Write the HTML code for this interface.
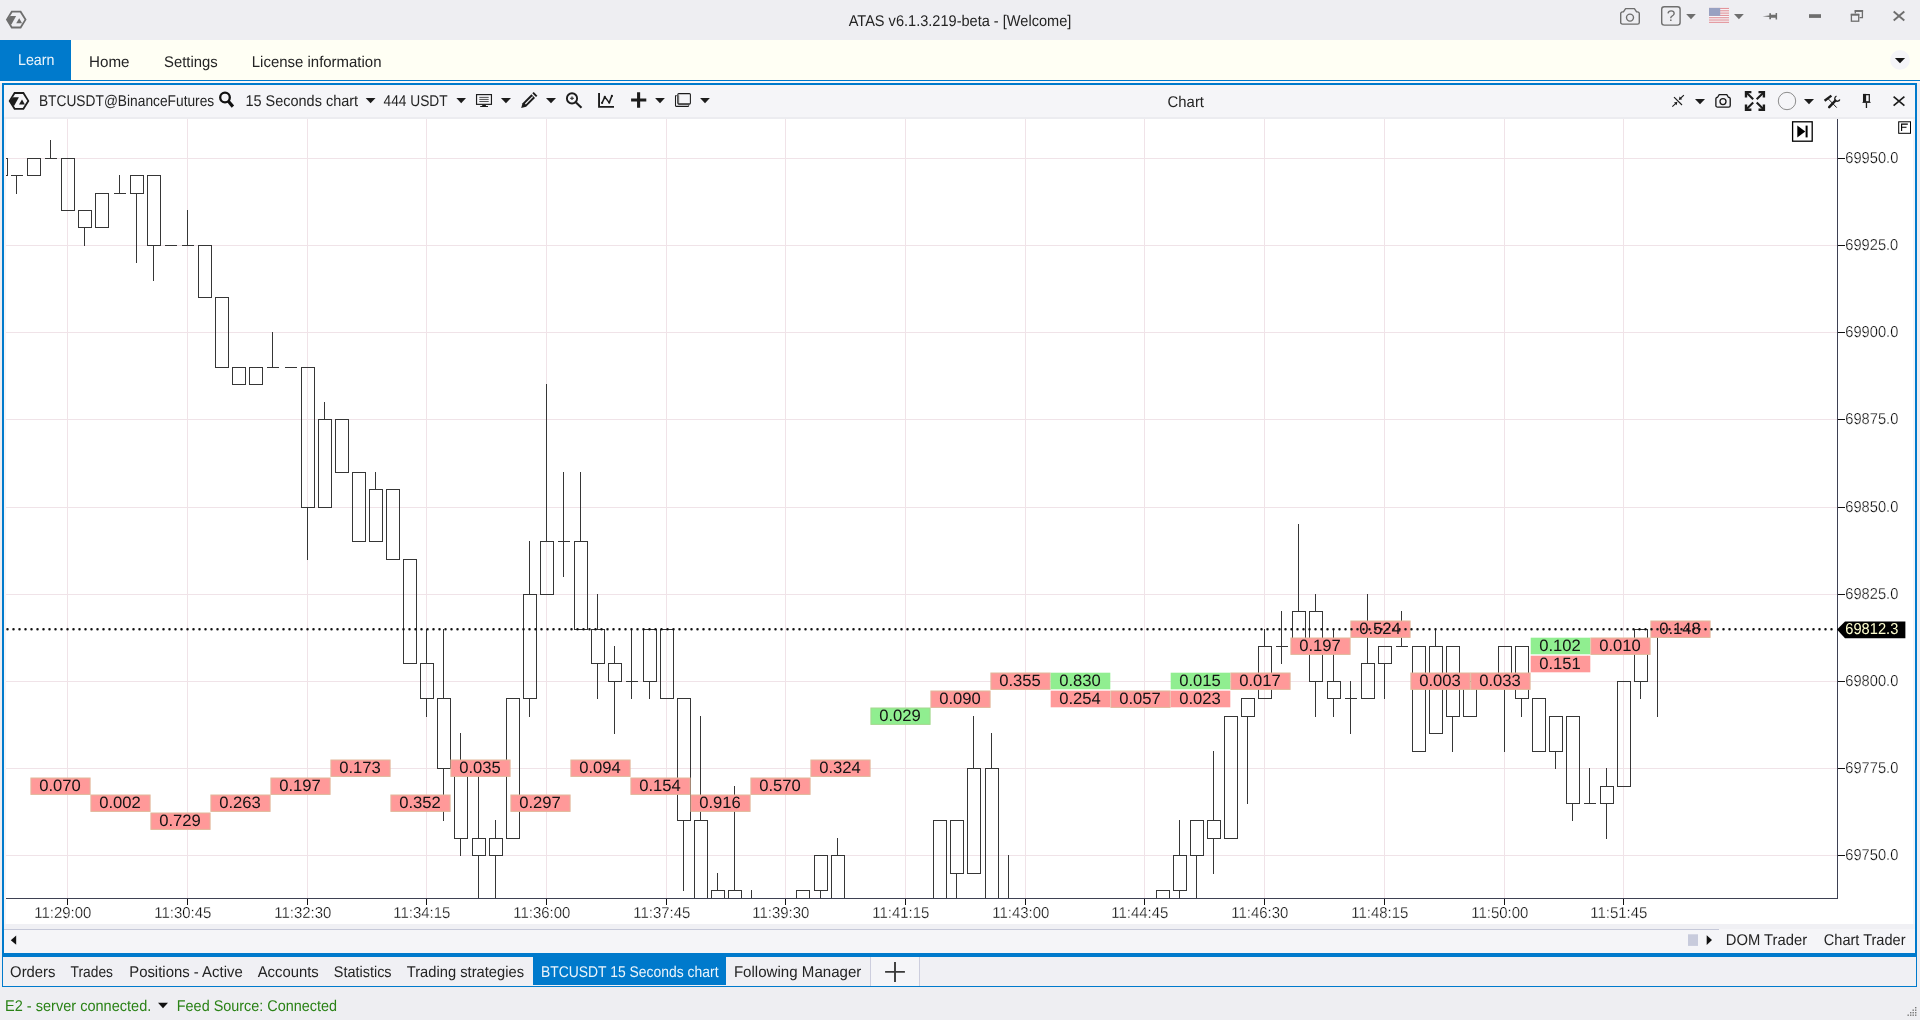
<!DOCTYPE html>
<html lang="en"><head><meta charset="utf-8"><title>ATAS v6.1.3.219-beta - [Welcome]</title>
<style>
html,body{margin:0;padding:0;background:#eeeef2;overflow:hidden}
body{width:1920px;height:1020px;position:relative}
svg{position:absolute;left:0;top:0;display:block;will-change:transform}
text{font-family:"Liberation Sans",Arial,sans-serif;white-space:pre}
</style></head><body>
<svg width="1920" height="1020" viewBox="0 0 1920 1020">
<rect x="0" y="0" width="1920" height="1020" fill="#eeeef2"/>
<g id="menubar">
<rect x="0" y="40" width="1920" height="40" fill="#fffff4"/>
<rect x="0" y="40" width="71" height="41" fill="#007acc"/>
<rect x="0" y="80" width="1920" height="1" fill="#007acc"/>
<rect x="0" y="81" width="1920" height="2" fill="#fbf6f5"/>
<text transform="matrix(1 0 0.0005 1 0 0)" x="17.97" y="65.00" font-size="15.55" fill="#ffffff" textLength="36.50" lengthAdjust="spacingAndGlyphs" fill-opacity="0.92">Learn</text>
<text transform="matrix(1 0 0.0005 1 0 0)" x="88.97" y="67.00" font-size="15.55" fill="#242424" textLength="40.50" lengthAdjust="spacingAndGlyphs">Home</text>
<text transform="matrix(1 0 0.0005 1 0 0)" x="163.97" y="67.00" font-size="15.55" fill="#242424" textLength="53.75" lengthAdjust="spacingAndGlyphs">Settings</text>
<text transform="matrix(1 0 0.0005 1 0 0)" x="251.77" y="67.00" font-size="15.55" fill="#242424" textLength="129.70" lengthAdjust="spacingAndGlyphs">License information</text>
<circle cx="1900" cy="59.9" r="9.9" fill="#f5f5f8"/>
<path d="M1894.9 57.9h10.2l-5.1 5.3z" fill="#151515"/>
</g>
<g id="titlebar">
<text transform="matrix(1 0 0.0005 1 0 0)" x="848.69" y="26.00" font-size="15.55" fill="#242424" textLength="222.60" lengthAdjust="spacingAndGlyphs">ATAS v6.1.3.219-beta - [Welcome]</text>
</g>
<g id="frame">
<rect x="2" y="83" width="1915" height="874" fill="#007acc"/>
<rect x="4" y="85" width="1911" height="868" fill="#f5f5f8"/>
<rect x="4" y="117" width="1911" height="2" fill="#ececf0"/>
<rect x="6" y="119" width="1907" height="805" fill="#ffffff"/>
<rect x="4" y="924" width="1911" height="5" fill="#f0f0f4"/>
<rect x="4" y="929" width="1715" height="1" fill="#c6c9d9"/>
</g>
<g id="tabs">
<rect x="2" y="957" width="1915" height="30" fill="#007acc"/>
<rect x="3" y="957" width="1913" height="29" fill="#f0f0f4"/>
<rect x="533" y="957" width="193" height="28" fill="#007acc"/>
<rect x="870" y="957" width="50" height="29" fill="#f5f5f8"/>
<rect x="870" y="957" width="1" height="29" fill="#cdcede"/><rect x="919" y="957" width="1" height="29" fill="#cdcede"/>
<path d="M885.1 971.9h19.8M895 962.1v19.8" stroke="#3a3a3a" stroke-width="1.9" fill="none"/>
<text transform="matrix(1 0 0.0005 1 0 0)" x="9.61" y="976.60" font-size="15.55" fill="#242424" textLength="45.40" lengthAdjust="spacingAndGlyphs">Orders</text>
<text transform="matrix(1 0 0.0005 1 0 0)" x="70.11" y="976.60" font-size="15.55" fill="#242424" textLength="42.40" lengthAdjust="spacingAndGlyphs">Trades</text>
<text transform="matrix(1 0 0.0005 1 0 0)" x="128.71" y="976.60" font-size="15.55" fill="#242424" textLength="113.50" lengthAdjust="spacingAndGlyphs">Positions - Active</text>
<text transform="matrix(1 0 0.0005 1 0 0)" x="257.21" y="976.60" font-size="15.55" fill="#242424" textLength="61.00" lengthAdjust="spacingAndGlyphs">Accounts</text>
<text transform="matrix(1 0 0.0005 1 0 0)" x="333.31" y="976.60" font-size="15.55" fill="#242424" textLength="57.80" lengthAdjust="spacingAndGlyphs">Statistics</text>
<text transform="matrix(1 0 0.0005 1 0 0)" x="406.26" y="976.60" font-size="15.55" fill="#242424" textLength="117.25" lengthAdjust="spacingAndGlyphs">Trading strategies</text>
<text transform="matrix(1 0 0.0005 1 0 0)" x="540.41" y="976.60" font-size="15.55" fill="#ffffff" textLength="177.60" lengthAdjust="spacingAndGlyphs" fill-opacity="0.92">BTCUSDT 15 Seconds chart</text>
<text transform="matrix(1 0 0.0005 1 0 0)" x="733.41" y="976.60" font-size="15.55" fill="#242424" textLength="127.50" lengthAdjust="spacingAndGlyphs">Following Manager</text>
</g>
<g id="status">
<text transform="matrix(1 0 0.0005 1 0 0)" x="4.49" y="1010.60" font-size="15.55" fill="#2a8216" textLength="146.30" lengthAdjust="spacingAndGlyphs">E2 - server connected.</text>
<path d="M158 1002.8h10l-5 5.5z" fill="#111"/>
<text transform="matrix(1 0 0.0005 1 0 0)" x="176.29" y="1010.60" font-size="15.55" fill="#2a8216" textLength="160.30" lengthAdjust="spacingAndGlyphs">Feed Source: Connected</text>
<rect x="1915.0" y="1007.0" width="1.4" height="1.4" fill="#777"/>
<rect x="1912.5" y="1009.5" width="1.4" height="1.4" fill="#777"/>
<rect x="1915.0" y="1009.5" width="1.4" height="1.4" fill="#777"/>
<rect x="1910.0" y="1012.0" width="1.4" height="1.4" fill="#777"/>
<rect x="1912.5" y="1012.0" width="1.4" height="1.4" fill="#777"/>
<rect x="1915.0" y="1012.0" width="1.4" height="1.4" fill="#777"/>
<rect x="1907.5" y="1014.5" width="1.4" height="1.4" fill="#777"/>
<rect x="1910.0" y="1014.5" width="1.4" height="1.4" fill="#777"/>
<rect x="1912.5" y="1014.5" width="1.4" height="1.4" fill="#777"/>
<rect x="1915.0" y="1014.5" width="1.4" height="1.4" fill="#777"/>
</g>
<g id="toolbar">
<text transform="matrix(1 0 0.0005 1 0 0)" x="38.85" y="106.00" font-size="15.55" fill="#242424" textLength="175.35" lengthAdjust="spacingAndGlyphs">BTCUSDT@BinanceFutures</text>
<text transform="matrix(1 0 0.0005 1 0 0)" x="245.35" y="106.00" font-size="15.55" fill="#242424" textLength="112.70" lengthAdjust="spacingAndGlyphs">15 Seconds chart</text>
<text transform="matrix(1 0 0.0005 1 0 0)" x="383.45" y="106.00" font-size="15.55" fill="#242424" textLength="64.20" lengthAdjust="spacingAndGlyphs">444 USDT</text>
<text transform="matrix(1 0 0.0005 1 0 0)" x="1167.55" y="106.75" font-size="15.55" fill="#242424" textLength="36.40" lengthAdjust="spacingAndGlyphs">Chart</text>
</g>
<g id="scrollrow">
<path d="M16.2 935.6v9.2l-5.4-4.6z" fill="#111"/>
<rect x="1688" y="934.3" width="10" height="11.6" fill="#c8cbdc"/>
<path d="M1706.7 935.2v9.8l5.3-4.9z" fill="#111"/>
<text transform="matrix(1 0 0.0005 1 0 0)" x="1725.28" y="944.90" font-size="15.55" fill="#242424" textLength="81.45" lengthAdjust="spacingAndGlyphs">DOM Trader</text>
<text transform="matrix(1 0 0.0005 1 0 0)" x="1823.33" y="944.90" font-size="15.55" fill="#242424" textLength="81.70" lengthAdjust="spacingAndGlyphs">Chart Trader</text>
</g>
<g id="chart">
<rect x="67" y="119" width="1" height="779" fill="#f0e3e8"/>
<rect x="187" y="119" width="1" height="779" fill="#f0e3e8"/>
<rect x="307" y="119" width="1" height="779" fill="#f0e3e8"/>
<rect x="426" y="119" width="1" height="779" fill="#f0e3e8"/>
<rect x="546" y="119" width="1" height="779" fill="#f0e3e8"/>
<rect x="666" y="119" width="1" height="779" fill="#f0e3e8"/>
<rect x="785" y="119" width="1" height="779" fill="#f0e3e8"/>
<rect x="905" y="119" width="1" height="779" fill="#f0e3e8"/>
<rect x="1025" y="119" width="1" height="779" fill="#f0e3e8"/>
<rect x="1144" y="119" width="1" height="779" fill="#f0e3e8"/>
<rect x="1264" y="119" width="1" height="779" fill="#f0e3e8"/>
<rect x="1384" y="119" width="1" height="779" fill="#f0e3e8"/>
<rect x="1504" y="119" width="1" height="779" fill="#f0e3e8"/>
<rect x="1623" y="119" width="1" height="779" fill="#f0e3e8"/>
<rect x="6" y="158" width="1831" height="1" fill="#f0e3e8"/>
<rect x="6" y="245" width="1831" height="1" fill="#f0e3e8"/>
<rect x="6" y="332" width="1831" height="1" fill="#f0e3e8"/>
<rect x="6" y="419" width="1831" height="1" fill="#f0e3e8"/>
<rect x="6" y="507" width="1831" height="1" fill="#f0e3e8"/>
<rect x="6" y="594" width="1831" height="1" fill="#f0e3e8"/>
<rect x="6" y="681" width="1831" height="1" fill="#f0e3e8"/>
<rect x="6" y="768" width="1831" height="1" fill="#f0e3e8"/>
<rect x="6" y="855" width="1831" height="1" fill="#f0e3e8"/>
<clipPath id="cc"><rect x="6" y="119" width="1831" height="779"/></clipPath>
<g clip-path="url(#cc)" shape-rendering="crispEdges" fill="none" stroke="#363636" stroke-width="1">
<rect x="-5.5" y="158.5" width="13" height="17"/>
<path d="M16.5 175V194M11 175.5H23" fill="none"/>
<rect x="27.5" y="158.5" width="13" height="17"/>
<path d="M50.5 140V158M45 158.5H57" fill="none"/>
<rect x="61.5" y="158.5" width="13" height="52"/>
<path d="M84.5 227V246" fill="none"/>
<rect x="78.5" y="210.5" width="13" height="17"/>
<rect x="95.5" y="193.5" width="13" height="34"/>
<path d="M119.5 175V193M114 193.5H126" fill="none"/>
<path d="M136.5 193V263" fill="none"/>
<rect x="130.5" y="175.5" width="13" height="18"/>
<path d="M153.5 245V281" fill="none"/>
<rect x="147.5" y="175.5" width="13" height="70"/>
<path d="M165 245.5H177" fill="none"/>
<path d="M187.5 210V245M182 245.5H194" fill="none"/>
<rect x="198.5" y="245.5" width="13" height="52"/>
<rect x="215.5" y="297.5" width="13" height="70"/>
<rect x="232.5" y="367.5" width="13" height="17"/>
<rect x="249.5" y="367.5" width="13" height="17"/>
<path d="M272.5 332V367M267 367.5H279" fill="none"/>
<path d="M285 367.5H297" fill="none"/>
<path d="M307.5 507V560" fill="none"/>
<rect x="301.5" y="367.5" width="13" height="140"/>
<path d="M324.5 402V419" fill="none"/>
<rect x="318.5" y="419.5" width="13" height="88"/>
<rect x="335.5" y="419.5" width="13" height="53"/>
<rect x="352.5" y="472.5" width="13" height="69"/>
<path d="M375.5 472V489" fill="none"/>
<rect x="369.5" y="489.5" width="13" height="52"/>
<rect x="386.5" y="489.5" width="13" height="70"/>
<rect x="403.5" y="559.5" width="13" height="104"/>
<path d="M426.5 629V663M426.5 698V717" fill="none"/>
<rect x="420.5" y="663.5" width="13" height="35"/>
<path d="M443.5 629V698M443.5 768V821" fill="none"/>
<rect x="437.5" y="698.5" width="13" height="70"/>
<path d="M460.5 733V768M460.5 838V856" fill="none"/>
<rect x="454.5" y="768.5" width="13" height="70"/>
<path d="M478.5 768V838M478.5 855V906" fill="none"/>
<rect x="472.5" y="838.5" width="13" height="17"/>
<path d="M495.5 820V838M495.5 855V906" fill="none"/>
<rect x="489.5" y="838.5" width="13" height="17"/>
<rect x="506.5" y="698.5" width="13" height="140"/>
<path d="M529.5 541V594M529.5 698V717" fill="none"/>
<rect x="523.5" y="594.5" width="13" height="104"/>
<path d="M546.5 384V541" fill="none"/>
<rect x="540.5" y="541.5" width="13" height="53"/>
<path d="M563.5 472V541M563.5 541V577M558 541.5H570" fill="none"/>
<path d="M580.5 472V541" fill="none"/>
<rect x="574.5" y="541.5" width="13" height="88"/>
<path d="M597.5 594V629M597.5 663V699" fill="none"/>
<rect x="591.5" y="629.5" width="13" height="34"/>
<path d="M614.5 646V663M614.5 681V734" fill="none"/>
<rect x="608.5" y="663.5" width="13" height="18"/>
<path d="M631.5 629V681M631.5 681V699M626 681.5H638" fill="none"/>
<path d="M649.5 681V699" fill="none"/>
<rect x="643.5" y="629.5" width="13" height="52"/>
<rect x="660.5" y="629.5" width="13" height="69"/>
<path d="M683.5 820V891" fill="none"/>
<rect x="677.5" y="698.5" width="13" height="122"/>
<path d="M700.5 716V820" fill="none"/>
<rect x="694.5" y="820.5" width="13" height="85"/>
<path d="M717.5 873V890" fill="none"/>
<rect x="711.5" y="890.5" width="13" height="15"/>
<path d="M734.5 786V890" fill="none"/>
<rect x="728.5" y="890.5" width="13" height="15"/>
<path d="M751.5 890V905" fill="none"/>
<rect x="796.5" y="890.5" width="13" height="15"/>
<path d="M820.5 890V906" fill="none"/>
<rect x="814.5" y="855.5" width="13" height="35"/>
<path d="M837.5 838V855" fill="none"/>
<rect x="831.5" y="855.5" width="13" height="50"/>
<rect x="933.5" y="820.5" width="13" height="85"/>
<path d="M956.5 873V906" fill="none"/>
<rect x="950.5" y="820.5" width="13" height="53"/>
<path d="M973.5 716V768" fill="none"/>
<rect x="967.5" y="768.5" width="13" height="105"/>
<path d="M991.5 733V768" fill="none"/>
<rect x="985.5" y="768.5" width="13" height="137"/>
<path d="M1008.5 855V905" fill="none"/>
<rect x="1156.5" y="890.5" width="13" height="15"/>
<path d="M1179.5 820V855M1179.5 890V906" fill="none"/>
<rect x="1173.5" y="855.5" width="13" height="35"/>
<path d="M1196.5 855V906" fill="none"/>
<rect x="1190.5" y="820.5" width="13" height="35"/>
<path d="M1213.5 751V820M1213.5 838V874" fill="none"/>
<rect x="1207.5" y="820.5" width="13" height="18"/>
<rect x="1224.5" y="716.5" width="13" height="122"/>
<path d="M1247.5 716V804" fill="none"/>
<rect x="1241.5" y="698.5" width="13" height="18"/>
<path d="M1264.5 629V646" fill="none"/>
<rect x="1258.5" y="646.5" width="13" height="52"/>
<path d="M1281.5 611V646M1281.5 646V664M1276 646.5H1288" fill="none"/>
<path d="M1298.5 524V611" fill="none"/>
<rect x="1292.5" y="611.5" width="13" height="35"/>
<path d="M1315.5 594V611M1315.5 681V717" fill="none"/>
<rect x="1309.5" y="611.5" width="13" height="70"/>
<path d="M1333.5 629V681M1333.5 698V717" fill="none"/>
<rect x="1327.5" y="681.5" width="13" height="17"/>
<path d="M1350.5 681V698M1350.5 698V734M1345 698.5H1357" fill="none"/>
<path d="M1367.5 594V663" fill="none"/>
<rect x="1361.5" y="663.5" width="13" height="35"/>
<path d="M1384.5 663V699" fill="none"/>
<rect x="1378.5" y="646.5" width="13" height="17"/>
<path d="M1401.5 611V646M1396 646.5H1408" fill="none"/>
<rect x="1412.5" y="646.5" width="13" height="105"/>
<path d="M1435.5 629V646" fill="none"/>
<rect x="1429.5" y="646.5" width="13" height="87"/>
<path d="M1452.5 716V752" fill="none"/>
<rect x="1446.5" y="646.5" width="13" height="70"/>
<rect x="1463.5" y="681.5" width="13" height="35"/>
<path d="M1504.5 681V752" fill="none"/>
<rect x="1498.5" y="646.5" width="13" height="35"/>
<path d="M1521.5 698V717" fill="none"/>
<rect x="1515.5" y="646.5" width="13" height="52"/>
<rect x="1532.5" y="698.5" width="13" height="53"/>
<path d="M1555.5 751V769" fill="none"/>
<rect x="1549.5" y="716.5" width="13" height="35"/>
<path d="M1572.5 803V821" fill="none"/>
<rect x="1566.5" y="716.5" width="13" height="87"/>
<path d="M1589.5 768V803M1584 803.5H1596" fill="none"/>
<path d="M1606.5 768V786M1606.5 803V839" fill="none"/>
<rect x="1600.5" y="786.5" width="13" height="17"/>
<rect x="1617.5" y="681.5" width="13" height="105"/>
<path d="M1640.5 681V699" fill="none"/>
<rect x="1634.5" y="629.5" width="13" height="52"/>
<path d="M1657.5 629V717M1652 629.5H1664" fill="none"/>
</g>
<g id="labels" font-size="16.4" text-anchor="middle" fill="#141414">
<rect x="30.9" y="778" width="59.2" height="16.4" fill="#ff9999" stroke="#e2b79a" stroke-width="1"/>
<text transform="matrix(1 0 0.0005 1 0 0)" x="59.60" y="791" textLength="41.7" lengthAdjust="spacingAndGlyphs">0.070</text>
<rect x="90.9" y="795" width="59.2" height="16.4" fill="#ff9999" stroke="#e2b79a" stroke-width="1"/>
<text transform="matrix(1 0 0.0005 1 0 0)" x="119.60" y="808" textLength="41.7" lengthAdjust="spacingAndGlyphs">0.002</text>
<rect x="150.9" y="813" width="59.2" height="16.4" fill="#ff9999" stroke="#e2b79a" stroke-width="1"/>
<text transform="matrix(1 0 0.0005 1 0 0)" x="179.59" y="826" textLength="41.7" lengthAdjust="spacingAndGlyphs">0.729</text>
<rect x="210.9" y="795" width="59.2" height="16.4" fill="#ff9999" stroke="#e2b79a" stroke-width="1"/>
<text transform="matrix(1 0 0.0005 1 0 0)" x="239.60" y="808" textLength="41.7" lengthAdjust="spacingAndGlyphs">0.263</text>
<rect x="270.9" y="778" width="59.2" height="16.4" fill="#ff9999" stroke="#e2b79a" stroke-width="1"/>
<text transform="matrix(1 0 0.0005 1 0 0)" x="299.60" y="791" textLength="41.7" lengthAdjust="spacingAndGlyphs">0.197</text>
<rect x="330.9" y="760" width="59.2" height="16.4" fill="#ff9999" stroke="#e2b79a" stroke-width="1"/>
<text transform="matrix(1 0 0.0005 1 0 0)" x="359.61" y="773" textLength="41.7" lengthAdjust="spacingAndGlyphs">0.173</text>
<rect x="390.9" y="795" width="59.2" height="16.4" fill="#ff9999" stroke="#e2b79a" stroke-width="1"/>
<text transform="matrix(1 0 0.0005 1 0 0)" x="419.60" y="808" textLength="41.7" lengthAdjust="spacingAndGlyphs">0.352</text>
<rect x="450.9" y="760" width="59.2" height="16.4" fill="#ff9999" stroke="#e2b79a" stroke-width="1"/>
<text transform="matrix(1 0 0.0005 1 0 0)" x="479.61" y="773" textLength="41.7" lengthAdjust="spacingAndGlyphs">0.035</text>
<rect x="510.9" y="795" width="59.2" height="16.4" fill="#ff9999" stroke="#e2b79a" stroke-width="1"/>
<text transform="matrix(1 0 0.0005 1 0 0)" x="539.60" y="808" textLength="41.7" lengthAdjust="spacingAndGlyphs">0.297</text>
<rect x="570.9" y="760" width="59.2" height="16.4" fill="#ff9999" stroke="#e2b79a" stroke-width="1"/>
<text transform="matrix(1 0 0.0005 1 0 0)" x="599.61" y="773" textLength="41.7" lengthAdjust="spacingAndGlyphs">0.094</text>
<rect x="630.9" y="778" width="59.2" height="16.4" fill="#ff9999" stroke="#e2b79a" stroke-width="1"/>
<text transform="matrix(1 0 0.0005 1 0 0)" x="659.60" y="791" textLength="41.7" lengthAdjust="spacingAndGlyphs">0.154</text>
<rect x="690.9" y="795" width="59.2" height="16.4" fill="#ff9999" stroke="#e2b79a" stroke-width="1"/>
<text transform="matrix(1 0 0.0005 1 0 0)" x="719.60" y="808" textLength="41.7" lengthAdjust="spacingAndGlyphs">0.916</text>
<rect x="750.9" y="778" width="59.2" height="16.4" fill="#ff9999" stroke="#e2b79a" stroke-width="1"/>
<text transform="matrix(1 0 0.0005 1 0 0)" x="779.60" y="791" textLength="41.7" lengthAdjust="spacingAndGlyphs">0.570</text>
<rect x="810.9" y="760" width="59.2" height="16.4" fill="#ff9999" stroke="#e2b79a" stroke-width="1"/>
<text transform="matrix(1 0 0.0005 1 0 0)" x="839.61" y="773" textLength="41.7" lengthAdjust="spacingAndGlyphs">0.324</text>
<rect x="870.9" y="708" width="59.2" height="16.4" fill="#90ee90" stroke="#a6d890" stroke-width="1"/>
<text transform="matrix(1 0 0.0005 1 0 0)" x="899.64" y="721" textLength="41.7" lengthAdjust="spacingAndGlyphs">0.029</text>
<rect x="930.9" y="691" width="59.2" height="16.4" fill="#ff9999" stroke="#e2b79a" stroke-width="1"/>
<text transform="matrix(1 0 0.0005 1 0 0)" x="959.65" y="704" textLength="41.7" lengthAdjust="spacingAndGlyphs">0.090</text>
<rect x="990.9" y="673" width="59.2" height="16.4" fill="#ff9999" stroke="#e2b79a" stroke-width="1"/>
<text transform="matrix(1 0 0.0005 1 0 0)" x="1019.66" y="686" textLength="41.7" lengthAdjust="spacingAndGlyphs">0.355</text>
<rect x="1050.7" y="672.7" width="59.6" height="16.6" fill="#90ee90"/>
<text transform="matrix(1 0 0.0005 1 0 0)" x="1079.66" y="686" textLength="41.7" lengthAdjust="spacingAndGlyphs">0.830</text>
<rect x="1050.7" y="690.7" width="59.6" height="16.6" fill="#ff9999"/>
<text transform="matrix(1 0 0.0005 1 0 0)" x="1079.65" y="704" textLength="41.7" lengthAdjust="spacingAndGlyphs">0.254</text>
<rect x="1110.9" y="691" width="59.2" height="16.4" fill="#ff9999" stroke="#e2b79a" stroke-width="1"/>
<text transform="matrix(1 0 0.0005 1 0 0)" x="1139.65" y="704" textLength="41.7" lengthAdjust="spacingAndGlyphs">0.057</text>
<rect x="1170.7" y="672.7" width="59.6" height="16.6" fill="#90ee90"/>
<text transform="matrix(1 0 0.0005 1 0 0)" x="1199.66" y="686" textLength="41.7" lengthAdjust="spacingAndGlyphs">0.015</text>
<rect x="1170.7" y="690.7" width="59.6" height="16.6" fill="#ff9999"/>
<text transform="matrix(1 0 0.0005 1 0 0)" x="1199.65" y="704" textLength="41.7" lengthAdjust="spacingAndGlyphs">0.023</text>
<rect x="1230.9" y="673" width="59.2" height="16.4" fill="#ff9999" stroke="#e2b79a" stroke-width="1"/>
<text transform="matrix(1 0 0.0005 1 0 0)" x="1259.66" y="686" textLength="41.7" lengthAdjust="spacingAndGlyphs">0.017</text>
<rect x="1290.9" y="638" width="59.2" height="16.4" fill="#ff9999" stroke="#e2b79a" stroke-width="1"/>
<text transform="matrix(1 0 0.0005 1 0 0)" x="1319.67" y="651" textLength="41.7" lengthAdjust="spacingAndGlyphs">0.197</text>
<rect x="1350.9" y="621" width="59.2" height="16.4" fill="#ff9999" stroke="#e2b79a" stroke-width="1"/>
<text transform="matrix(1 0 0.0005 1 0 0)" x="1379.68" y="634" textLength="41.7" lengthAdjust="spacingAndGlyphs">0.524</text>
<rect x="1410.9" y="673" width="59.2" height="16.4" fill="#ff9999" stroke="#e2b79a" stroke-width="1"/>
<text transform="matrix(1 0 0.0005 1 0 0)" x="1439.66" y="686" textLength="41.7" lengthAdjust="spacingAndGlyphs">0.003</text>
<rect x="1470.9" y="673" width="59.2" height="16.4" fill="#ff9999" stroke="#e2b79a" stroke-width="1"/>
<text transform="matrix(1 0 0.0005 1 0 0)" x="1499.66" y="686" textLength="41.7" lengthAdjust="spacingAndGlyphs">0.033</text>
<rect x="1530.7" y="637.7" width="59.6" height="16.6" fill="#90ee90"/>
<text transform="matrix(1 0 0.0005 1 0 0)" x="1559.67" y="651" textLength="41.7" lengthAdjust="spacingAndGlyphs">0.102</text>
<rect x="1530.7" y="655.7" width="59.6" height="16.6" fill="#ff9999"/>
<text transform="matrix(1 0 0.0005 1 0 0)" x="1559.67" y="669" textLength="41.7" lengthAdjust="spacingAndGlyphs">0.151</text>
<rect x="1590.9" y="638" width="59.2" height="16.4" fill="#ff9999" stroke="#e2b79a" stroke-width="1"/>
<text transform="matrix(1 0 0.0005 1 0 0)" x="1619.67" y="651" textLength="41.7" lengthAdjust="spacingAndGlyphs">0.010</text>
<rect x="1650.9" y="621" width="59.2" height="16.4" fill="#ff9999" stroke="#e2b79a" stroke-width="1"/>
<text transform="matrix(1 0 0.0005 1 0 0)" x="1679.68" y="634" textLength="41.7" lengthAdjust="spacingAndGlyphs">0.148</text>
</g>
<path d="M7.5 629.3H1834" stroke="#111" stroke-width="2.5" stroke-linecap="round" stroke-dasharray="0 6" fill="none"/>
<rect x="6" y="898" width="1832" height="1" fill="#3e4152"/>
<rect x="1837" y="119" width="1" height="780" fill="#3e4152"/>
<g id="timeaxis" font-size="15.8" fill="#000" stroke="#fff" stroke-width="0.3">
<rect x="67" y="899" width="1" height="6" fill="#111" stroke="none"/>
<text transform="matrix(1 0 0.0005 1 0 0)" x="33.84" y="917.8" textLength="57.1" lengthAdjust="spacingAndGlyphs">11:29:00</text>
<rect x="187" y="899" width="1" height="6" fill="#111" stroke="none"/>
<text transform="matrix(1 0 0.0005 1 0 0)" x="153.84" y="917.8" textLength="57.1" lengthAdjust="spacingAndGlyphs">11:30:45</text>
<rect x="307" y="899" width="1" height="6" fill="#111" stroke="none"/>
<text transform="matrix(1 0 0.0005 1 0 0)" x="273.84" y="917.8" textLength="57.1" lengthAdjust="spacingAndGlyphs">11:32:30</text>
<rect x="426" y="899" width="1" height="6" fill="#111" stroke="none"/>
<text transform="matrix(1 0 0.0005 1 0 0)" x="392.84" y="917.8" textLength="57.1" lengthAdjust="spacingAndGlyphs">11:34:15</text>
<rect x="546" y="899" width="1" height="6" fill="#111" stroke="none"/>
<text transform="matrix(1 0 0.0005 1 0 0)" x="512.84" y="917.8" textLength="57.1" lengthAdjust="spacingAndGlyphs">11:36:00</text>
<rect x="666" y="899" width="1" height="6" fill="#111" stroke="none"/>
<text transform="matrix(1 0 0.0005 1 0 0)" x="632.84" y="917.8" textLength="57.1" lengthAdjust="spacingAndGlyphs">11:37:45</text>
<rect x="785" y="899" width="1" height="6" fill="#111" stroke="none"/>
<text transform="matrix(1 0 0.0005 1 0 0)" x="751.84" y="917.8" textLength="57.1" lengthAdjust="spacingAndGlyphs">11:39:30</text>
<rect x="905" y="899" width="1" height="6" fill="#111" stroke="none"/>
<text transform="matrix(1 0 0.0005 1 0 0)" x="871.84" y="917.8" textLength="57.1" lengthAdjust="spacingAndGlyphs">11:41:15</text>
<rect x="1025" y="899" width="1" height="6" fill="#111" stroke="none"/>
<text transform="matrix(1 0 0.0005 1 0 0)" x="991.84" y="917.8" textLength="57.1" lengthAdjust="spacingAndGlyphs">11:43:00</text>
<rect x="1144" y="899" width="1" height="6" fill="#111" stroke="none"/>
<text transform="matrix(1 0 0.0005 1 0 0)" x="1110.84" y="917.8" textLength="57.1" lengthAdjust="spacingAndGlyphs">11:44:45</text>
<rect x="1264" y="899" width="1" height="6" fill="#111" stroke="none"/>
<text transform="matrix(1 0 0.0005 1 0 0)" x="1230.84" y="917.8" textLength="57.1" lengthAdjust="spacingAndGlyphs">11:46:30</text>
<rect x="1384" y="899" width="1" height="6" fill="#111" stroke="none"/>
<text transform="matrix(1 0 0.0005 1 0 0)" x="1350.84" y="917.8" textLength="57.1" lengthAdjust="spacingAndGlyphs">11:48:15</text>
<rect x="1504" y="899" width="1" height="6" fill="#111" stroke="none"/>
<text transform="matrix(1 0 0.0005 1 0 0)" x="1470.84" y="917.8" textLength="57.1" lengthAdjust="spacingAndGlyphs">11:50:00</text>
<rect x="1623" y="899" width="1" height="6" fill="#111" stroke="none"/>
<text transform="matrix(1 0 0.0005 1 0 0)" x="1589.84" y="917.8" textLength="57.1" lengthAdjust="spacingAndGlyphs">11:51:45</text>
</g>
<g id="priceaxis" font-size="15.8" fill="#000" stroke="#fff" stroke-width="0.3">
<rect x="1838" y="158" width="7" height="1" fill="#111" stroke="none"/>
<text transform="matrix(1 0 0.0005 1 0 0)" x="1845.22" y="163.2" textLength="53" lengthAdjust="spacingAndGlyphs">69950.0</text>
<rect x="1838" y="245" width="7" height="1" fill="#111" stroke="none"/>
<text transform="matrix(1 0 0.0005 1 0 0)" x="1845.17" y="250.2" textLength="53" lengthAdjust="spacingAndGlyphs">69925.0</text>
<rect x="1838" y="332" width="7" height="1" fill="#111" stroke="none"/>
<text transform="matrix(1 0 0.0005 1 0 0)" x="1845.13" y="337.2" textLength="53" lengthAdjust="spacingAndGlyphs">69900.0</text>
<rect x="1838" y="419" width="7" height="1" fill="#111" stroke="none"/>
<text transform="matrix(1 0 0.0005 1 0 0)" x="1845.09" y="424.2" textLength="53" lengthAdjust="spacingAndGlyphs">69875.0</text>
<rect x="1838" y="507" width="7" height="1" fill="#111" stroke="none"/>
<text transform="matrix(1 0 0.0005 1 0 0)" x="1845.04" y="512.2" textLength="53" lengthAdjust="spacingAndGlyphs">69850.0</text>
<rect x="1838" y="594" width="7" height="1" fill="#111" stroke="none"/>
<text transform="matrix(1 0 0.0005 1 0 0)" x="1845.00" y="599.2" textLength="53" lengthAdjust="spacingAndGlyphs">69825.0</text>
<rect x="1838" y="681" width="7" height="1" fill="#111" stroke="none"/>
<text transform="matrix(1 0 0.0005 1 0 0)" x="1844.96" y="686.2" textLength="53" lengthAdjust="spacingAndGlyphs">69800.0</text>
<rect x="1838" y="768" width="7" height="1" fill="#111" stroke="none"/>
<text transform="matrix(1 0 0.0005 1 0 0)" x="1844.91" y="773.2" textLength="53" lengthAdjust="spacingAndGlyphs">69775.0</text>
<rect x="1838" y="855" width="7" height="1" fill="#111" stroke="none"/>
<text transform="matrix(1 0 0.0005 1 0 0)" x="1844.87" y="860.2" textLength="53" lengthAdjust="spacingAndGlyphs">69750.0</text>
</g>
<path d="M1837 629.6L1845 621.5H1905.4V638.3H1845z" fill="#000"/>
<text transform="matrix(1 0 0.0005 1 0 0)" x="1844.98" y="634.2" font-size="15.8" fill="#ffffd0" textLength="53" lengthAdjust="spacingAndGlyphs">69812.3</text>
<rect x="1792.6" y="121.8" width="19.6" height="19.4" fill="#fff" stroke="#000" stroke-width="1.3"/>
<path d="M1797.3 125.6v11.8l8-5.9z" fill="#000"/><rect x="1805.6" y="125.6" width="2" height="11.8" fill="#000"/>
<rect x="1898.7" y="121.8" width="11.8" height="11.5" fill="#fff" stroke="#000" stroke-width="1"/>
<path d="M1901.6 131v-6.9h6.2M1901.6 127.3h4.9" stroke="#000" stroke-width="1.1" fill="none"/>
</g>
<g transform="translate(0,0)" fill="#1c1c1c">
<path d="M9.7 100.9L14.6 93h8.8l4.9 7.9-4.9 7.9h-8.8z" fill="none" stroke="#1c1c1c" stroke-width="1.8" stroke-linejoin="miter"/>
<path d="M9.9 100.6L13.2 97.2h5.7l-4.7 8.6h-1.4z"/>
<path d="M22 99.6l2.9 5h-5.9z"/>
</g>
<g transform="translate(-2.8,-81.3)" fill="#6e6e6e">
<path d="M9.7 100.9L14.6 93h8.8l4.9 7.9-4.9 7.9h-8.8z" fill="none" stroke="#6e6e6e" stroke-width="1.8" stroke-linejoin="miter"/>
<path d="M9.9 100.6L13.2 97.2h5.7l-4.7 8.6h-1.4z"/>
<path d="M22 99.6l2.9 5h-5.9z"/>
</g>
<g id="title-icons">
<path d="M1622.40 11.90H1623.40L1625.60 8.60H1634.40L1636.60 11.90H1637.60a1.7 1.7 0 0 1 1.7 1.7V22.40a1.7 1.7 0 0 1 -1.7 1.7H1622.40a1.7 1.7 0 0 1 -1.7 -1.7V13.60a1.7 1.7 0 0 1 1.7 -1.7z" fill="none" stroke="#6e6e6e" stroke-width="1.4" stroke-linejoin="round"/>
<circle cx="1630" cy="17.6" r="3.5" fill="none" stroke="#6e6e6e" stroke-width="1.4"/>
<rect x="1661.7" y="6.7" width="18.4" height="18.4" rx="2.6" fill="none" stroke="#6e6e6e" stroke-width="1.4"/>
<text transform="matrix(1 0 0.0005 1 0 0)" x="1671" y="21.2" font-size="15.5" text-anchor="middle" fill="#6e6e6e">?</text>
<path d="M1686.2 14H1695.8L1691.0 19.2z" fill="#6e6e6e"/>
<g opacity="0.48">
<rect x="1709" y="7.9" width="20" height="15" fill="#fff"/>
<rect x="1709" y="7.90" width="20" height="1.15" fill="#d8343f"/>
<rect x="1709" y="10.21" width="20" height="1.15" fill="#d8343f"/>
<rect x="1709" y="12.52" width="20" height="1.15" fill="#d8343f"/>
<rect x="1709" y="14.83" width="20" height="1.15" fill="#d8343f"/>
<rect x="1709" y="17.14" width="20" height="1.15" fill="#d8343f"/>
<rect x="1709" y="19.45" width="20" height="1.15" fill="#d8343f"/>
<rect x="1709" y="21.76" width="20" height="1.15" fill="#d8343f"/>
<rect x="1709" y="7.9" width="11.2" height="8" fill="#3d4f8f"/>
</g>
<path d="M1734 14H1743.8L1738.9 19.2z" fill="#6e6e6e"/>
<path d="M1762.5 16.2L1769.3 15.6V13.2h1.7v1.5h4.6V13h1.5v6.4h-1.5v-1.6h-4.6v1.5h-1.7V16.9z" fill="#6e6e6e"/>
<rect x="1809" y="14.2" width="12" height="3.7" fill="#6e6e6e"/>
<path d="M1855.3 13.6V10.9h7.1v6.8h-2.9" fill="none" stroke="#6e6e6e" stroke-width="1.3"/><rect x="1854.7" y="10" width="8.4" height="1.9" fill="#6e6e6e"/>
<rect x="1851.4" y="14.6" width="7.3" height="6.6" fill="none" stroke="#6e6e6e" stroke-width="1.3"/><rect x="1850.8" y="13.7" width="8.5" height="1.9" fill="#6e6e6e"/>
<path d="M1893.7 11.5l10.6 8.9M1904.3 11.5l-10.6 8.9" stroke="#6e6e6e" stroke-width="1.9" fill="none"/>
</g>
<g id="toolbar-icons">
<circle cx="225" cy="97.5" r="4.8" fill="none" stroke="#111" stroke-width="2.3"/><path d="M228.4 101.3l4.5 5.3" stroke="#111" stroke-width="3.2" fill="none"/>
<path d="M365.7 97.9H375.5L370.6 103.3z" fill="#1c1c1c"/>
<path d="M456.4 97.9H466L461.2 103.3z" fill="#1c1c1c"/>
<rect x="476.55" y="94.6" width="14.9" height="9.75" fill="none" stroke="#1c1c1c" stroke-width="1.15"/>
<path d="M479.3 97.4h9.4M479.3 99.45h9.4M479.3 101.5h9.4" stroke="#2a2a2a" stroke-width="0.8" fill="none"/>
<path d="M482.2 104.9h3.7v1.1h2.1v.9h-7.8v-.9h2z" fill="#1c1c1c"/>
<path d="M500.9 97.9H511L505.95 103.3z" fill="#1c1c1c"/>
<path d="M521.2 108.1l1.3-4.9 8.9-8.9 3.6 3.6-8.9 8.9z" fill="#1c1c1c"/>
<path d="M525.4 104l7.3-7.3" stroke="#f5f5f8" stroke-width="1.1" fill="none"/>
<path d="M532.3 93.3l1.4-1.3 3.7 3.7-1.4 1.4z" fill="#1c1c1c"/>
<path d="M546 97.9H556L551.0 103.3z" fill="#1c1c1c"/>
<circle cx="572" cy="98.4" r="5.1" fill="none" stroke="#1c1c1c" stroke-width="1.9"/><path d="M576 102.4l5.5 5.3" stroke="#1c1c1c" stroke-width="2.1" fill="none"/>
<path d="M570.2 98.3h3.6M572 96.5v3.6" stroke="#3a3a3a" stroke-width="1.3" fill="none"/>
<path d="M599.05 93.1V106.85H614" fill="none" stroke="#1c1c1c" stroke-width="1.9"/>
<path d="M602.1 102.9l2.7-6 4.4 5.7 2.7-6.7" fill="none" stroke="#1c1c1c" stroke-width="1.5" stroke-linejoin="round"/>
<circle cx="602.1" cy="102.9" r="1.1" fill="#1c1c1c"/><circle cx="604.8" cy="96.9" r="1.1" fill="#1c1c1c"/><circle cx="609.2" cy="102.6" r="1.1" fill="#1c1c1c"/><circle cx="611.9" cy="95.9" r="1.1" fill="#1c1c1c"/>
<path d="M631.1 100h15.2M638.6 92.3v15.4" stroke="#1c1c1c" stroke-width="3.1" fill="none"/>
<path d="M655.1 97.9H664.9L660.0 103.3z" fill="#1c1c1c"/>
<path d="M678.6 95.2v8.4h11" fill="none" stroke="#9a9a9a" stroke-width="1.4"/>
<rect x="677.8" y="93.6" width="12.6" height="10.5" rx="1" fill="none" stroke="#1c1c1c" stroke-width="1.05"/>
<path d="M676.6 95.6h-.5a.6 .6 0 0 0 -.6 .6v9.6a.6 .6 0 0 0 .6 .6h12a.6 .6 0 0 0 .6-.6v-.6" fill="none" stroke="#1c1c1c" stroke-width="1.05"/>
<path d="M700.1 97.9H709.9L705.0 103.3z" fill="#1c1c1c"/>
<path d="M1674 97.2l8 7.8" stroke="#1c1c1c" stroke-width="1.15" fill="none"/>
<path d="M1672.3 106.7l3.6-3.4M1683.9 95.1l-3.6 3.4" stroke="#1c1c1c" stroke-width="1.1" fill="none"/>
<path d="M1677.4 101.8l-3.4 .7 2.6 2.7zM1678.8 100l3.4-.7-2.6-2.7z" fill="#1c1c1c"/>
<path d="M1695 99H1705L1700.0 104.2z" fill="#1c1c1c"/>
<path d="M1717.58 97.27H1717.60L1719.20 94.67H1726.80L1728.40 97.27H1728.53a1.7 1.7 0 0 1 1.7 1.7V105.42a1.7 1.7 0 0 1 -1.7 1.7H1717.58a1.7 1.7 0 0 1 -1.7 -1.7V98.97a1.7 1.7 0 0 1 1.7 -1.7z" fill="none" stroke="#1c1c1c" stroke-width="1.35" stroke-linejoin="round"/>
<circle cx="1723" cy="101.6" r="3.0" fill="none" stroke="#1c1c1c" stroke-width="1.35"/>
<path d="M1746.6 92.7l6.6 6.5M1763.3 92.7l-6.6 6.5M1746.6 109.1l6.6-6.5M1763.3 109.1l-6.6-6.5" stroke="#1c1c1c" stroke-width="2.1" fill="none"/>
<path d="M1746 97.4V92.1h5.4M1758.5 92.1h5.4v5.3M1763.9 104.4v5.3h-5.4M1751.4 109.7h-5.4v-5.3" stroke="#1c1c1c" stroke-width="2.4" fill="none"/>
<circle cx="1787" cy="101" r="8.7" fill="none" stroke="#8c8c8c" stroke-width="1"/>
<path d="M1804 99H1814L1809.0 104.2z" fill="#1c1c1c"/>
<path d="M1824.6 100.8l6.8-5.2" stroke="#1c1c1c" stroke-width="2.4" fill="none"/>
<path d="M1828.3 98.9l8.4 8.7" stroke="#1c1c1c" stroke-width="1" fill="none"/>
<path d="M1829.2 107.1l6.2-6.5" stroke="#1c1c1c" stroke-width="2.5" stroke-linecap="round" fill="none"/>
<path d="M1836.5 96.2A2.6 2.6 0 1 0 1839.8 99.5" stroke="#1c1c1c" stroke-width="1.3" fill="none"/>
<path d="M1863.6 94.5h5.7v7.3h-5.7z" fill="none" stroke="#1c1c1c" stroke-width="1.25"/><rect x="1863" y="93.9" width="3.1" height="8" fill="#1c1c1c"/>
<path d="M1862.1 102.8l.9-1.1h7.1l.9 1.1z" fill="#1c1c1c"/><rect x="1865.8" y="102.7" width="1.3" height="5.3" fill="#1c1c1c"/>
<path d="M1893.6 96.7l10.8 9M1904.4 96.7l-10.8 9" stroke="#1c1c1c" stroke-width="1.7" fill="none"/>
</g>
</svg>
</body></html>
